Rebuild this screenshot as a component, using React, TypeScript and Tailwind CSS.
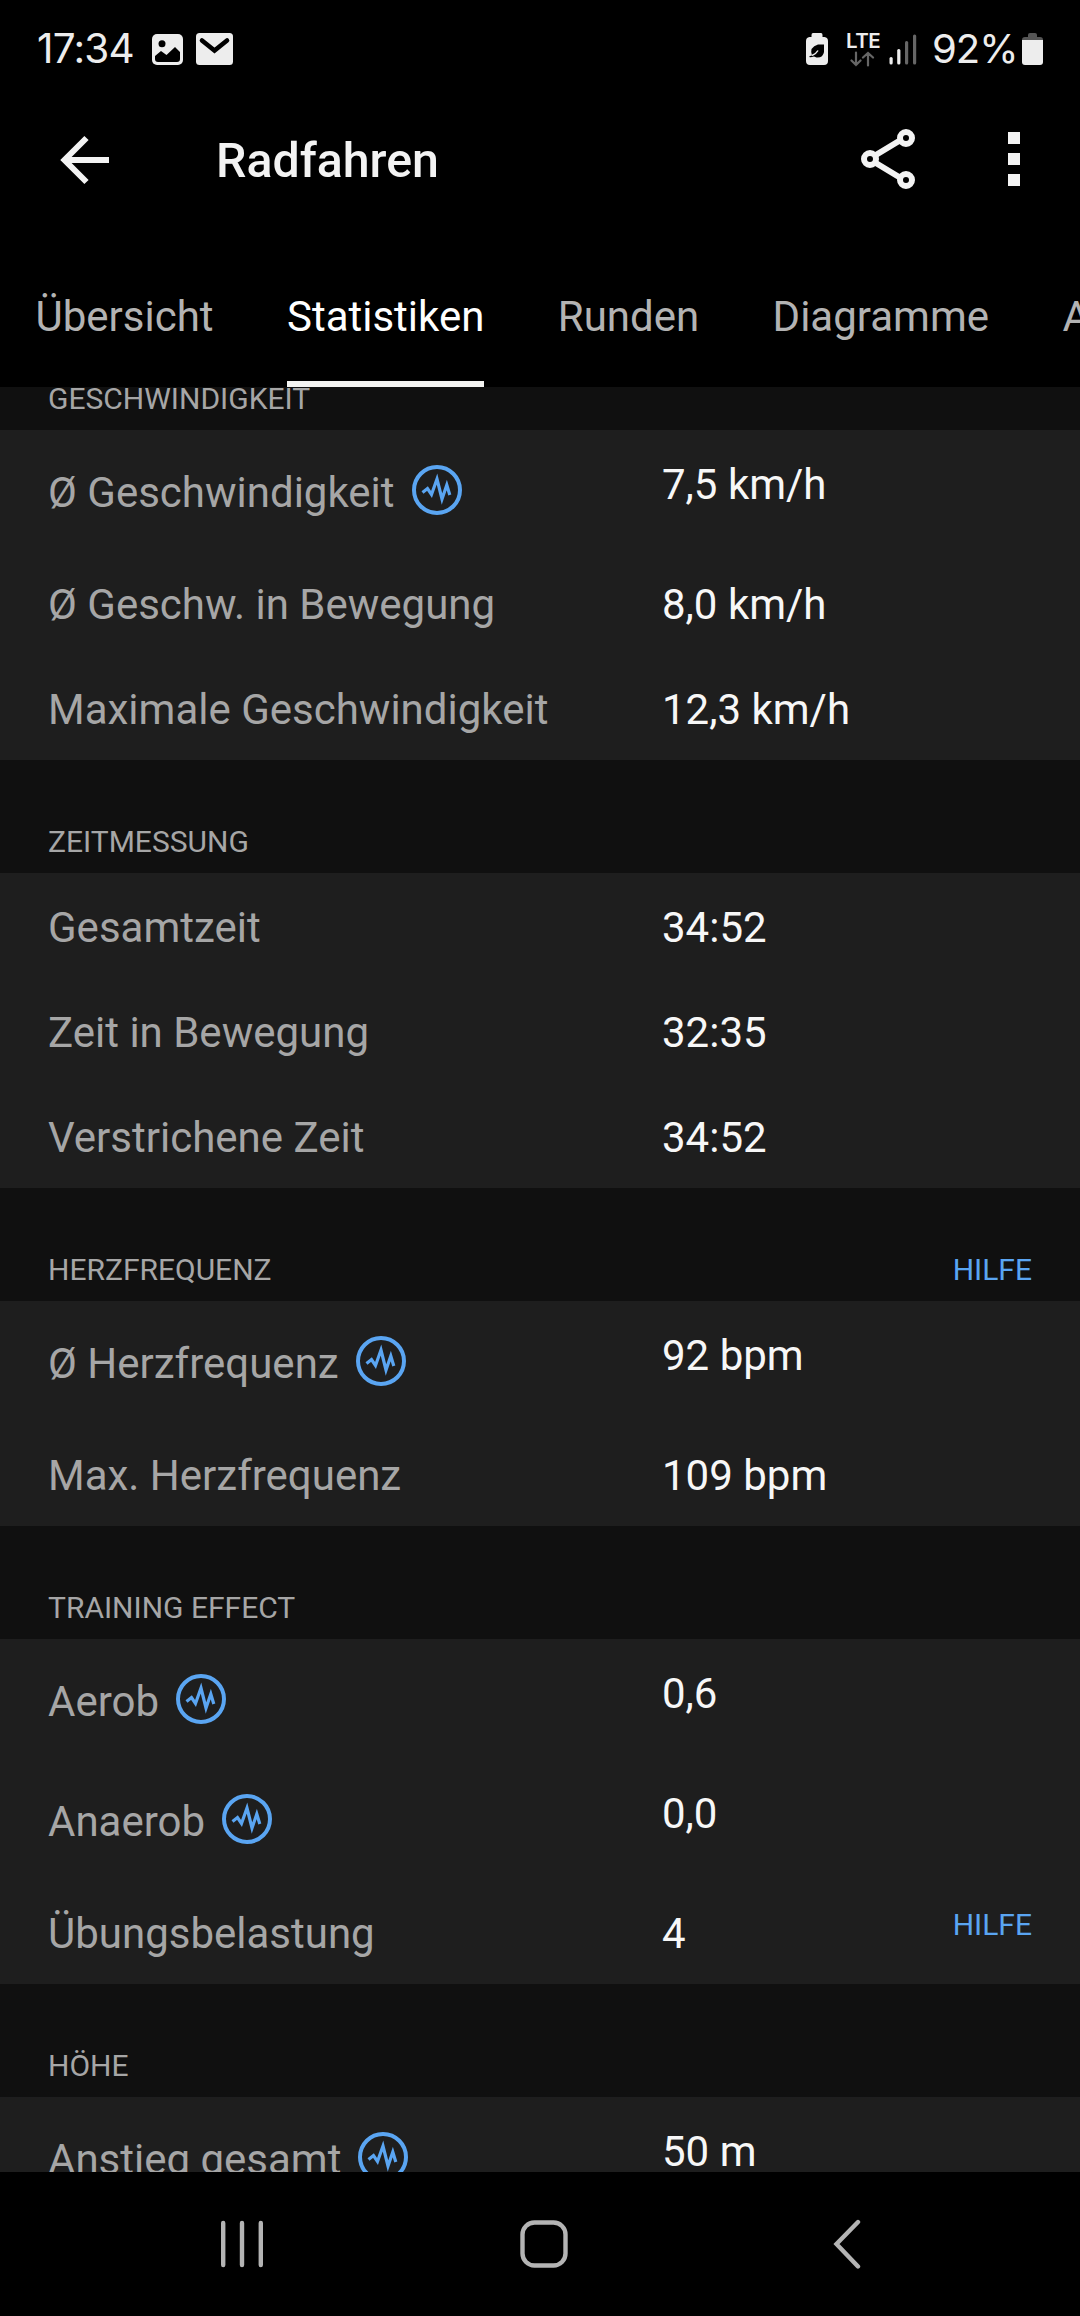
// Activity detail: statistics tab
interface Stat {
  label: string;
  value: string;
  chart?: boolean;
  help?: boolean;
}

interface Section {
  title: string;
  help?: boolean;
  stats: Stat[];
}

const TABS = ["Übersicht", "Statistiken", "Runden", "Diagramme", "Ausrüstung"];

const SECTIONS: Section[] = [
  {
    title: "GESCHWINDIGKEIT",
    stats: [
      { label: "Ø Geschwindigkeit", value: "7,5 km/h", chart: true },
      { label: "Ø Geschw. in Bewegung", value: "8,0 km/h" },
      { label: "Maximale Geschwindigkeit", value: "12,3 km/h" },
    ],
  },
  {
    title: "ZEITMESSUNG",
    stats: [
      { label: "Gesamtzeit", value: "34:52" },
      { label: "Zeit in Bewegung", value: "32:35" },
      { label: "Verstrichene Zeit", value: "34:52" },
    ],
  },
  {
    title: "HERZFREQUENZ",
    help: true,
    stats: [
      { label: "Ø Herzfrequenz", value: "92 bpm", chart: true },
      { label: "Max. Herzfrequenz", value: "109 bpm" },
    ],
  },
  {
    title: "TRAINING EFFECT",
    stats: [
      { label: "Aerob", value: "0,6", chart: true },
      { label: "Anaerob", value: "0,0", chart: true },
      { label: "Übungsbelastung", value: "4", help: true },
    ],
  },
  {
    title: "HÖHE",
    stats: [{ label: "Anstieg gesamt", value: "50 m", chart: true }],
  },
];

function ChartIcon() {
  return (
    <svg className="ml-[17px] -mt-[3px] h-[50px] w-[50px] shrink-0" viewBox="0 0 50 50" fill="none" stroke="#5aa5f2">
      <circle cx="25" cy="25" r="23" strokeWidth="4" />
      <path d="M10.5 27.5L15.5 23.5L19.5 29.5L25 14L30 34L34.8 20L37.8 30" strokeWidth="3.2" strokeMiterlimit="10" />
    </svg>
  );
}

function StatusBar() {
  return (
    <div className="flex h-[99px] items-start justify-between pt-[33px] pr-[37px] pl-[37px] text-[#ededed]">
      <div className="flex h-[32px] items-center">
        <span className="w-[98px] font-['Inter'] text-[40.5px] leading-[32px] tracking-[-0.8px] whitespace-nowrap">17:34</span>
        <svg className="ml-[17px] h-[31px] w-[31px]" viewBox="0 0 31 31">
          <rect width="31" height="31" rx="5" fill="#ededed" />
          <circle cx="10" cy="9.8" r="3.5" fill="#000" />
          <path d="M3 22L9 17L14.5 21L23 13L28 18V25Q28 28 25 28H6Q3 28 3 25Z" fill="#000" />
        </svg>
        <svg className="ml-[13px] h-[32px] w-[37px]" viewBox="0 0 37 32">
          <rect width="37" height="32" rx="3.5" fill="#ededed" />
          <path d="M6 7.5L18.5 17.5L31 7.5" fill="none" stroke="#000" strokeWidth="4.6" strokeLinecap="round" />
        </svg>
      </div>
      <div className="flex h-[32px] items-center">
        <svg className="h-[32px] w-[22px]" viewBox="0 0 22 32">
          <path d="M7 0H15Q16.5 0 16.5 2V4H18.5Q22 4.5 22 8V28Q22 32 18 32H4Q0 32 0 28V8Q0 4.5 3.5 4H5.5V2Q5.5 0 7 0Z" fill="#ededed" />
          <path d="M18 11.5V19Q17 25 10.5 24.5L8 23.5Q5 24.5 3 24Q3.5 22.5 6 22.5Q3 14 12 11.5Z" fill="#000" />
          <path d="M6 22.5Q10 21 12 17.5" fill="none" stroke="#ededed" strokeWidth="1.5" />
        </svg>
        <div className="ml-[18px] h-[34px] w-[34px] pt-px">
          <div className="font-['Inter'] text-[20.5px] leading-[15px] font-semibold tracking-[-0.5px]">LTE</div>
          <svg className="mt-[3px] ml-[4px] h-[16px] w-[25px]" viewBox="0 0 25 16" fill="none" stroke="#666" strokeWidth="2.2" strokeLinecap="round">
            <path d="M6 1.5V14M1.5 9.5L6 14L10.5 9.5M18 14.5V2M13 6.5L18 2L23 6.5" />
          </svg>
        </div>
        <svg className="ml-[9px] h-[31px] w-[28px]" viewBox="0 0 28 31">
          <rect x="0.5" y="23" width="3.2" height="7.5" rx="1.5" fill="#ededed" />
          <rect x="8.2" y="15" width="3.2" height="15.5" rx="1.5" fill="#ededed" />
          <rect x="16" y="7" width="3.2" height="23.5" rx="1.5" fill="#666" />
          <rect x="24" y="0.5" width="3.2" height="30" rx="1.5" fill="#666" />
        </svg>
        <span className="ml-[15px] w-[86px] font-['Inter'] text-[40px] leading-[32px] tracking-[-1px] whitespace-nowrap">92%</span>
        <svg className="ml-[4px] h-[32px] w-[21px]" viewBox="0 0 21 32">
          <path d="M6 4V2Q6 0 8 0H13Q15 0 15 2V4H18Q21 4 21 7H0Q0 4 3 4Z" fill="#555" />
          <path d="M0 7H21V29Q21 32 18 32H3Q0 32 0 29Z" fill="#ededed" />
        </svg>
      </div>
    </div>
  );
}

function AppBar() {
  return (
    <div className="flex h-[120px] items-center pr-[60px] pl-[60px] text-[#f3f3f3]">
      <svg className="mt-px h-[50px] w-[50px]" viewBox="0 0 50 50" fill="none" stroke="currentColor" strokeWidth="6">
        <path d="M49 25H5M26.5 3L4.5 25L26.5 47" />
      </svg>
      <h1 className="mt-[3px] ml-[106px] flex-1 text-[48.3px] leading-[56px] font-medium">Radfahren</h1>
      <svg className="h-[62px] w-[56px]" viewBox="0 0 56 62" fill="none" stroke="currentColor" strokeWidth="6">
        <path d="M15 27.5L39 13M15 34.5L39 49" />
        <circle cx="10" cy="31" r="6" />
        <circle cx="46" cy="10" r="6" />
        <circle cx="46" cy="52" r="6" />
      </svg>
      <div className="ml-[92px] flex flex-col gap-[9px]">
        <div className="h-3 w-3 bg-[#f3f3f3]" />
        <div className="h-3 w-3 bg-[#f3f3f3]" />
        <div className="h-3 w-3 bg-[#f3f3f3]" />
      </div>
    </div>
  );
}

function StatRow({ stat }: { stat: Stat }) {
  return (
    <div className={`flex items-start pr-12 pl-12 ${stat.chart ? "h-[120px]" : "h-[105px]"}`}>
      <div className={`flex w-[614px] text-[#a6a6a6] ${stat.chart ? "pt-[38px]" : "pt-[30px]"}`}>
        <span>{stat.label}</span>
        {stat.chart && <ChartIcon />}
      </div>
      <div className="flex-1 pt-[30px] text-[#f7f7f7]">{stat.value}</div>
      {stat.help && <HelpLink className="pt-[28px]" />}
    </div>
  );
}

function HelpLink({ className = "" }: { className?: string }) {
  return <a className={`text-[30px] leading-[35px] text-[#5aa5f2] ${className}`}>HILFE</a>;
}

function NavBar() {
  return (
    <div className="flex h-[144px] shrink-0 items-center justify-between bg-black pr-[219px] pl-[220px]">
      <svg className="h-[50px] w-[44px]" viewBox="0 0 44 50" stroke="#b4b4b4" strokeWidth="4.4" strokeLinecap="round">
        <path d="M3.2 4V46M22 4V46M40.8 4V46" />
      </svg>
      <svg className="mr-[10px] h-[48px] w-[48px]" viewBox="0 0 48 48" fill="none" stroke="#b4b4b4" strokeWidth="4.4">
        <rect x="2.5" y="2.5" width="43" height="43" rx="12" />
      </svg>
      <svg className="h-[50px] w-[28px]" viewBox="0 0 28 50" fill="none" stroke="#b4b4b4" strokeWidth="4.4" strokeLinecap="round">
        <path d="M25 3L3.5 25L25 47.5" />
      </svg>
    </div>
  );
}

export default function App() {
  return (
    <div className="flex h-[2316px] w-[1080px] flex-col overflow-hidden bg-black font-['Roboto',sans-serif] text-[42px] leading-[49px]">
      <StatusBar />
      <AppBar />

      {/* Tabs */}
      <div className="flex h-[168px] shrink-0 gap-[73.4px] overflow-hidden pl-[35.5px]">
        {TABS.map((tab) => (
          <div
            key={tab}
            className={`shrink-0 border-b-[6px] pt-[73px] ${
              tab === "Statistiken" ? "border-[#f3f3f1] text-white" : "border-transparent text-[#b3b3b3]"
            }`}
          >
            {tab}
          </div>
        ))}
      </div>

      {/* Scrolled list, first header partly under the tabs */}
      <div className="min-h-0 flex-1 overflow-hidden bg-[#101010]">
        <div className="-mt-[70px]">
          {SECTIONS.map((section) => (
            <section key={section.title}>
              <div className="flex h-[113px] items-end justify-between px-12 pb-[14px] text-[#a6a6a6]">
                <h2 className="text-[30px] leading-[35px]">{section.title}</h2>
                {section.help && <HelpLink />}
              </div>
              <div className="bg-[#1e1e1e]">
                {section.stats.map((stat) => (
                  <StatRow key={stat.label} stat={stat} />
                ))}
              </div>
            </section>
          ))}
        </div>
      </div>

      <NavBar />
    </div>
  );
}
